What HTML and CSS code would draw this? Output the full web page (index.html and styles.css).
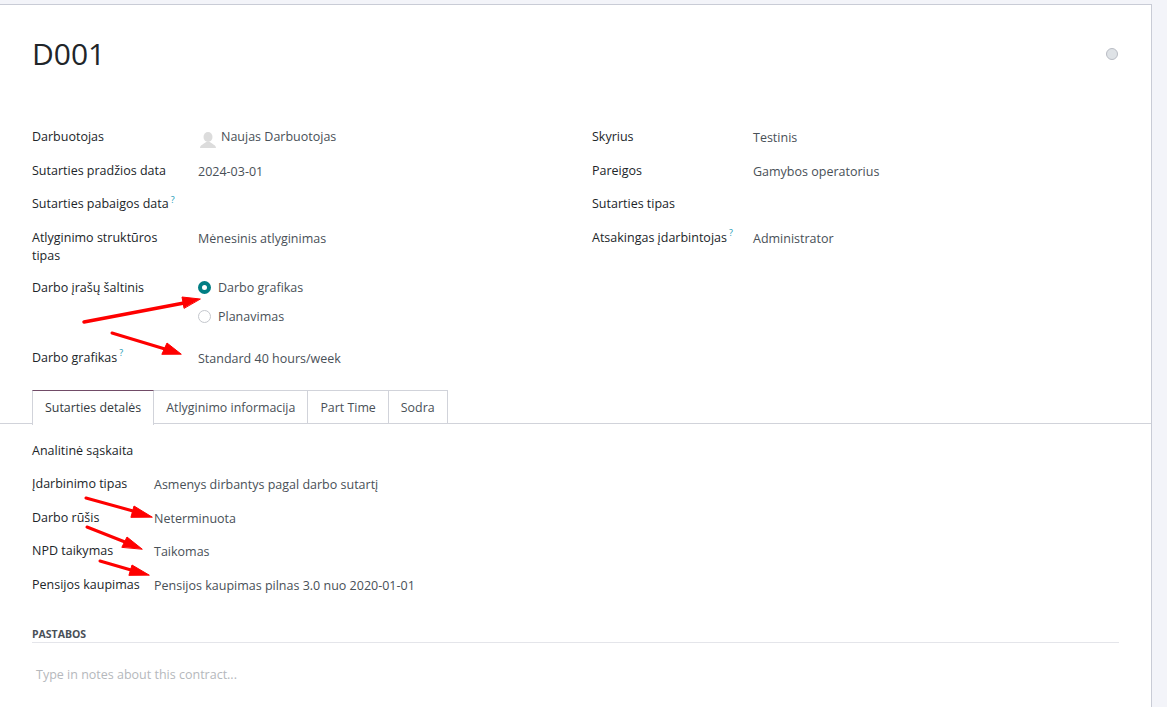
FILE: index.html
```html
<!DOCTYPE html>
<html>
<head>
    <title>D001</title>
    <link rel="stylesheet" href="styles.css">
</head>
<body>
    <div class="sheet">
        <div class="title-row">
            <h1>D001</h1>
            <span class="status-dot"></span>
        </div>

        <div class="form-columns">
            <div class="field-group left-group">
                <div class="label">Darbuotojas</div>
                <div class="value employee">
                    <svg class="avatar" width="16" height="16" viewBox="0 0 16 16">
                        <ellipse cx="8" cy="5" rx="4.500" ry="5" fill="#dcdcdc"/>
                        <path d="M0 16c0-3 4-4 6-6h4c2 2 6 3 6 6z" fill="#dcdcdc"/>
                    </svg>
                    Naujas Darbuotojas
                </div>
                <div class="label">Sutarties pradžios data</div>
                <div class="value">2024-03-01</div>
                <div class="label">Sutarties pabaigos data<sup class="help">?</sup></div>
                <div class="value"></div>
                <div class="label wrapped">Atlyginimo struktūros tipas</div>
                <div class="value">Mėnesinis atlyginimas</div>
                <div class="label">Darbo įrašų šaltinis</div>
                <div class="radios">
                    <div class="radio-row"><span class="radio checked"></span>Darbo grafikas</div>
                    <div class="radio-row"><span class="radio"></span>Planavimas</div>
                </div>
                <div class="label">Darbo grafikas<sup class="help">?</sup></div>
                <div class="value">Standard 40 hours/week</div>
            </div>

            <div class="field-group right-group">
                <div class="label">Skyrius</div>
                <div class="value">Testinis</div>
                <div class="label">Pareigos</div>
                <div class="value">Gamybos operatorius</div>
                <div class="label">Sutarties tipas</div>
                <div class="value"></div>
                <div class="label">Atsakingas įdarbintojas<sup class="help">?</sup></div>
                <div class="value">Administrator</div>
            </div>
        </div>

        <div class="tabs">
            <div class="tab active">Sutarties detalės</div>
            <div class="tab">Atlyginimo informacija</div>
            <div class="tab">Part Time</div>
            <div class="tab">Sodra</div>
        </div>

        <div class="tab-body">
            <div class="field-group detail-group">
                <div class="label">Analitinė sąskaita</div>
                <div class="value"></div>
                <div class="label">Įdarbinimo tipas</div>
                <div class="value">Asmenys dirbantys pagal darbo sutartį</div>
                <div class="label">Darbo rūšis</div>
                <div class="value">Neterminuota</div>
                <div class="label">NPD taikymas</div>
                <div class="value">Taikomas</div>
                <div class="label">Pensijos kaupimas</div>
                <div class="value">Pensijos kaupimas pilnas 3.0 nuo 2020-01-01</div>
            </div>

            <div class="section-title">PASTABOS</div>
            <div class="notes">Type in notes about this contract...</div>
        </div>
    </div>

    <!-- red arrows drawn on top of the screenshot -->
    <svg class="arrows" width="1167" height="707" viewBox="0 0 1167 707">
        <g fill="#fe0000" stroke="#fe0000" stroke-linejoin="round" stroke-linecap="round">
            <path d="M84 322L184 303" stroke-width="3.500"/>
            <path d="M200 299L182 297L184 308z" stroke-width="1"/>
            <path d="M112 333L165 349" stroke-width="3"/>
            <path d="M181 354L167 343L162 354z" stroke-width="1"/>
            <path d="M86 498L133 511" stroke-width="3"/>
            <path d="M152 517L134 506L131 517z" stroke-width="1"/>
            <path d="M87 527L125 542" stroke-width="3"/>
            <path d="M142 549L127 537L122 547z" stroke-width="1"/>
            <path d="M100 561L131 570" stroke-width="3"/>
            <path d="M149 575L132 565L129 575z" stroke-width="1"/>
        </g>
    </svg>
</body>
</html>
```

FILE: styles.css
```css
html, body {
    margin: 0;
    padding: 0;
    height: 707px;
    overflow: hidden;
}
body {
    background-color: #f3f4f9;
    font-family: "Open Sans", "Noto Sans", sans-serif;
    font-size: 12.5px;
    line-height: 18px;
    color: #212529;
}
.sheet {
    margin-top: 4px;
    width: 1152px;
    height: 703px;
    box-sizing: border-box;
    background-color: #fff;
    border-top: 1px solid #c9ccd6;
    border-right: 1px solid #c9ccd6;
}
.title-row {
    display: flex;
    align-items: center;
    justify-content: space-between;
    padding: 28px 33px 0 32px;
    height: 42px;
}
h1 {
    margin: 0;
    font-size: 30px;
    font-weight: 400;
    line-height: 42px;
}
.status-dot {
    width: 10px;
    height: 10px;
    border-radius: 50%;
    background-color: #dee2e6;
    border: 1px solid #b9bcc4;
}
.form-columns {
    display: flex;
    padding: 53px 0 0 32px;
    height: 262px;
}
.field-group {
    display: grid;
    align-content: start;
}
.left-group {
    grid-template-columns: 166px 1fr;
    width: 560px;
    flex: none;
}
.right-group {
    grid-template-columns: 161px 1fr;
    flex: 1;
}
.label {
    padding-bottom: 15.500px;
}
.label.wrapped {
    padding-right: 20px;
    padding-bottom: 14px;
}
.value {
    color: #495057;
    padding-top: 1px;
}
.employee {
    display: flex;
    align-items: flex-start;
    gap: 5px;
    padding-top: 0;
}
.avatar {
    margin-top: 4px;
    margin-left: 2px;
}
.help {
    color: #1b9ab5;
    font-size: 9px;
    line-height: 0;
    margin-left: 2px;
}
.radios {
    color: #495057;
}
.radio-row {
    display: flex;
    align-items: center;
    height: 18px;
    margin-bottom: 11px;
}
.radio-row:last-child {
    margin-bottom: 23px;
}
.radio {
    width: 11px;
    height: 11px;
    margin-right: 7px;
    border: 1px solid #c4c7cd;
    border-radius: 50%;
    background-color: #fff;
}
.radio.checked {
    width: 5px;
    height: 5px;
    border: 4px solid #017e84;
}
.tabs {
    display: flex;
    padding-left: 32px;
    height: 33px;
    border-bottom: 1px solid #d1d3da;
}
.tab {
    height: 33px;
    line-height: 33px;
    padding: 0 12px;
    font-size: 12.4px;
    color: #495057;
    border: 1px solid #d1d3da;
    border-left: none;
    border-bottom: none;
}
.tab.active {
    height: 34px;
    color: #343a40;
    background-color: #fff;
    border-left: 1px solid #d1d3da;
    border-top: 1px solid #714b67;
}
.tab-body {
    padding: 17.500px 32px 0 32px;
}
.detail-group {
    grid-template-columns: 122px 1fr;
}
.section-title {
    margin-top: 15.500px;
    height: 17px;
    font-size: 10.500px;
    font-weight: 700;
    color: #495057;
    border-bottom: 1px solid #e4e5ea;
}
.notes {
    margin-top: 23px;
    padding-left: 4px;
    color: #b5b8bc;
}
.arrows {
    position: absolute;
    top: 0;
    left: 0;
    pointer-events: none;
}
```
